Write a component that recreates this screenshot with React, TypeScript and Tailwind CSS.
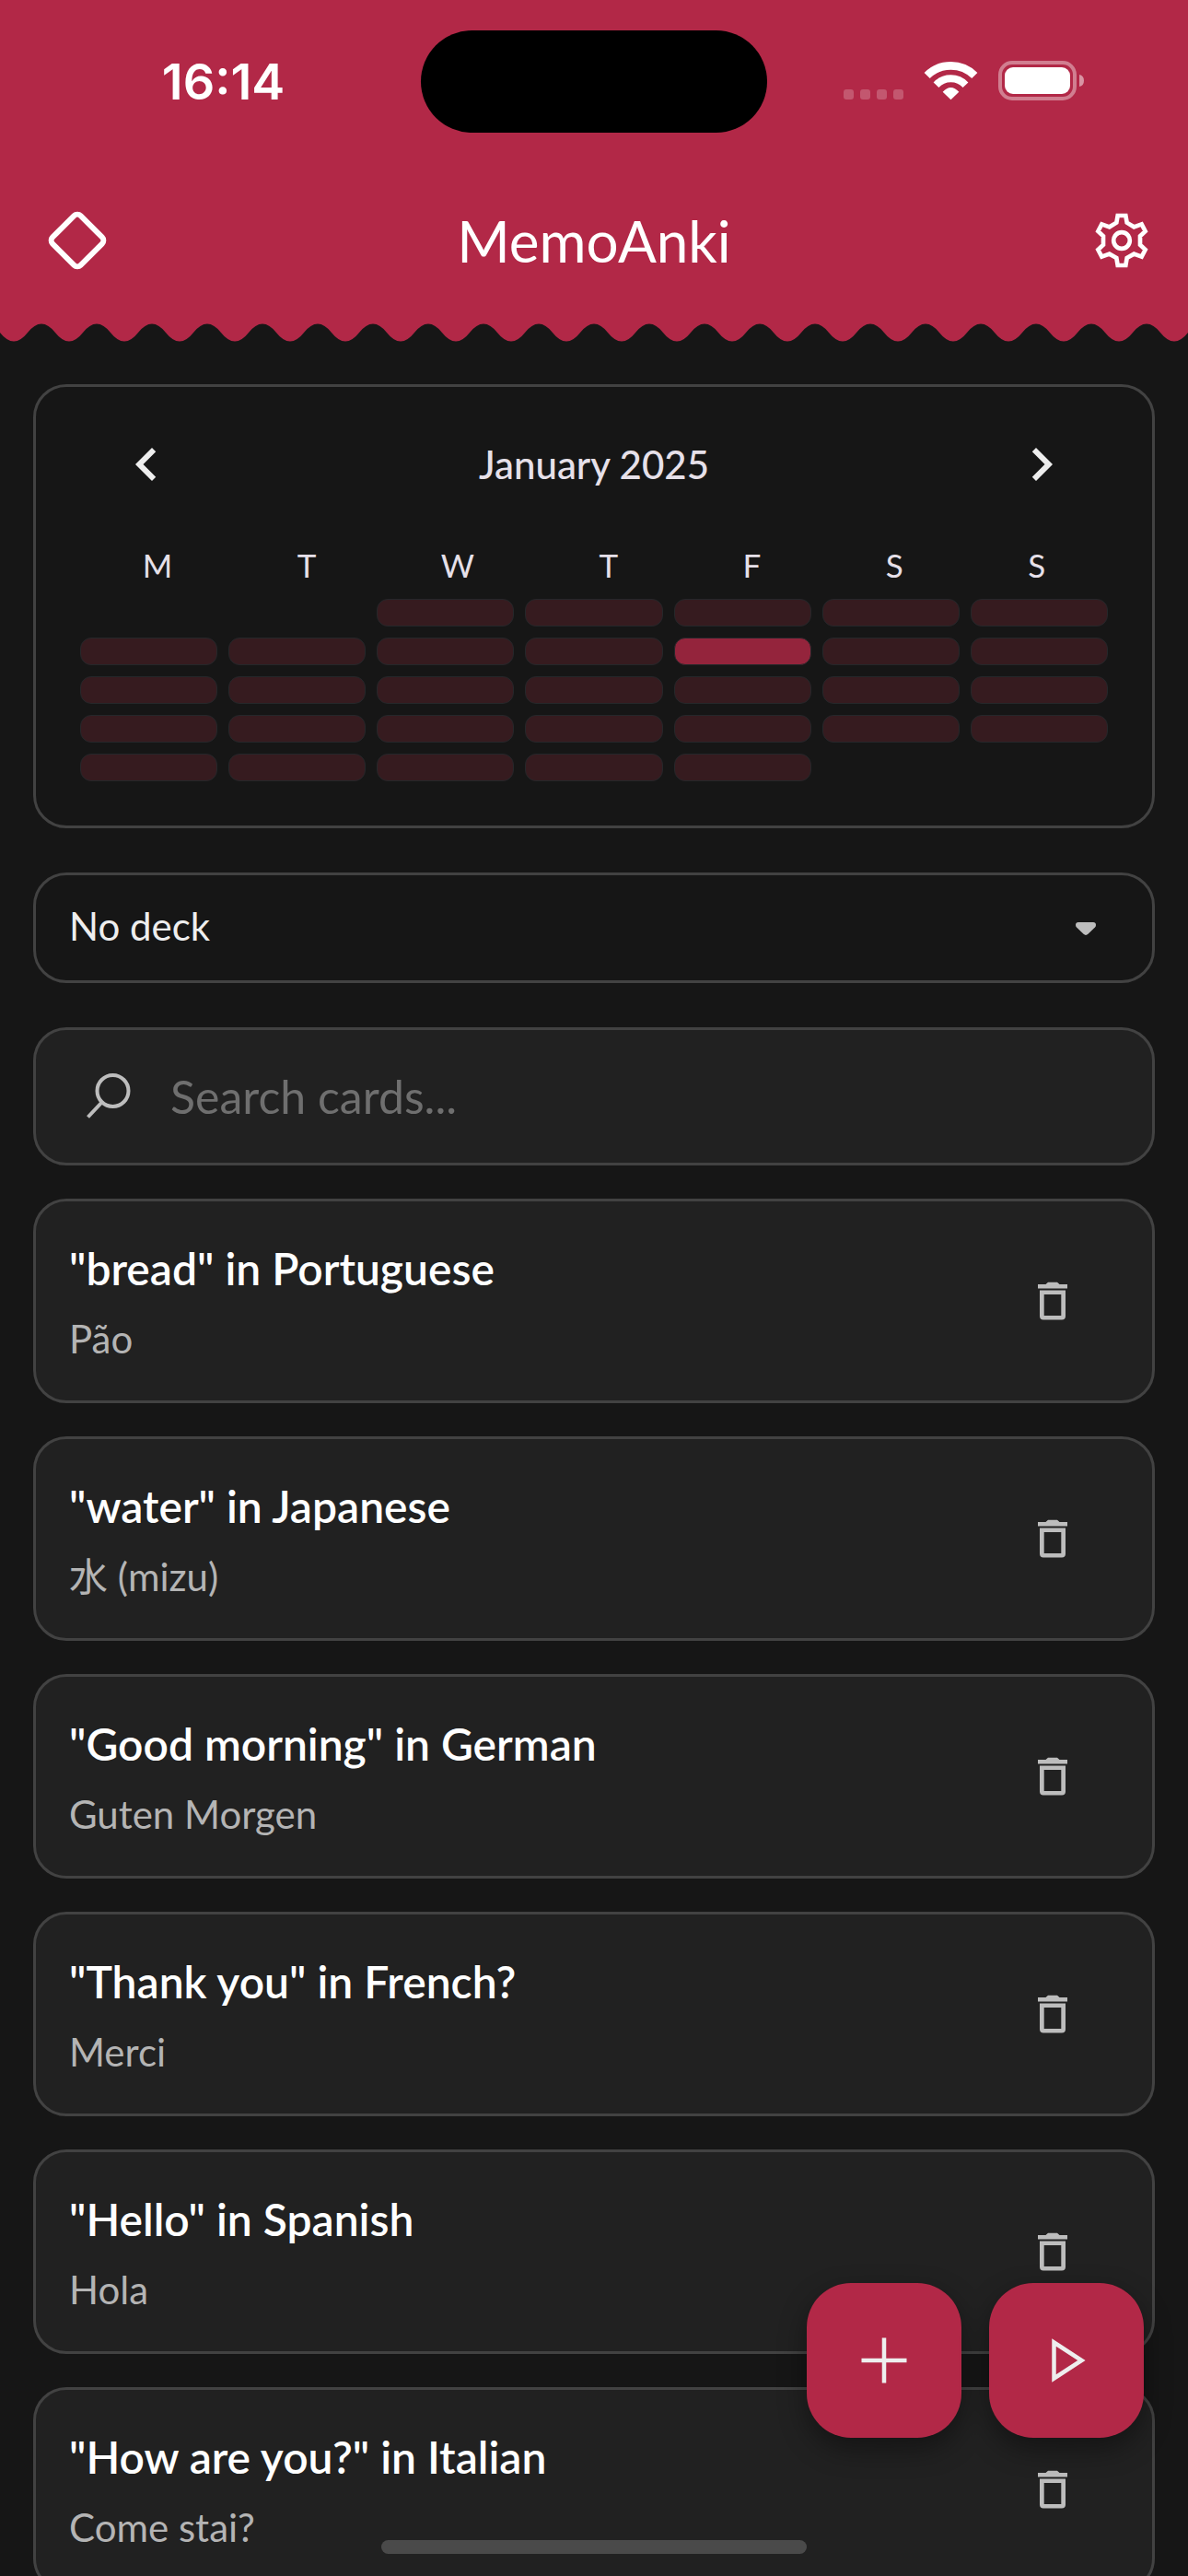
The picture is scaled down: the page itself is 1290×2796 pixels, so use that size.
const weekdays = ['M', 'T', 'W', 'T', 'F', 'S', 'S'];

// January 2025 starts on a Wednesday
const leadingBlanks = 2;
const daysInMonth = 31;
const activeDay = 10;

const cards = [
  { question: '"bread" in Portuguese', answer: 'Pão' },
  { question: '"water" in Japanese', answer: '水 (mizu)' },
  { question: '"Good morning" in German', answer: 'Guten Morgen' },
  { question: '"Thank you" in French?', answer: 'Merci' },
  { question: '"Hello" in Spanish', answer: 'Hola' },
  { question: '"How are you?" in Italian', answer: 'Come stai?' },
];

const StatusBar = () => {
  return (
    <div className="grid h-[177px] grid-cols-[1fr_376px_1fr] items-center">
      <div className="pl-7 text-center font-['Inter',sans-serif] text-[54px] font-semibold text-white">16:14</div>
      <div className="h-[111px] rounded-full bg-black"></div>
      <div className="flex items-center justify-center pr-[34px]">
        <svg viewBox="0 0 290 70" className="h-[70px] w-[290px]" fill="none" aria-hidden="true">
          <g fill="#fff" fillOpacity="0.22">
            <rect x="16" y="43" width="11" height="11" rx="3" />
            <rect x="34" y="43" width="11" height="11" rx="3" />
            <rect x="52" y="43" width="11" height="11" rx="3" />
            <rect x="70" y="43" width="11" height="11" rx="3" />
          </g>
          <g transform="translate(0 -3) scale(0.3333)">
            <path d="M320 93A110 110 0 0 1 475 93" stroke="#fff" strokeWidth="26" />
            <path d="M349.5 123.5A66 66 0 0 1 445.500 123.500" stroke="#fff" strokeWidth="24" />
            <path d="M397.500 172L371 146Q397.500 118 424 146Z" fill="#fff" />
          </g>
          <rect x="186" y="14" width="81" height="39" rx="13" stroke="#fff" strokeOpacity="0.4" strokeWidth="4" />
          <rect x="191" y="19" width="71" height="29" rx="9" fill="#fff" />
          <path d="M272 27Q277 28 277 33.500Q277 39 272 40Z" fill="#fff" fillOpacity="0.5" />
        </svg>
      </div>
    </div>
  );
};

const Header = () => {
  return (
    <header>
      <div className="bg-[#b22847]">
        <StatusBar />
        <div className="flex h-[168px] items-center justify-between px-9">
          <button type="button" aria-label="Decks" className="flex w-24">
            <svg viewBox="18 9 288 288" className="size-24" fill="none" stroke="#fff" strokeWidth="18">
              <rect x="97.500" y="88.500" width="129" height="129" rx="15" transform="rotate(45 162 153)" />
            </svg>
          </button>
          <h1 className="text-[62px] leading-none text-white">MemoAnki</h1>
          <button type="button" aria-label="Settings" className="flex w-24 justify-end">
            <svg viewBox="36 42 216 216" className="size-[72px]" fill="none" stroke="#fff" strokeWidth="14">
              <path d="M131 69H157L161 92L184 106L209 97L221 120L204 136V164L221 180L209 203L184 194L161 207L157 231H131L127 207L104 194L79 203L67 180L84 164V136L67 120L79 97L104 106L127 92Z" />
              <circle cx="144" cy="150" r="26.500" />
            </svg>
          </button>
        </div>
      </div>
      {/* Wavy edge */}
      <svg className="block h-[27px] w-full" aria-hidden="true">
        <defs>
          <pattern id="wave" width="60" height="27" patternUnits="userSpaceOnUse">
            <path d="M0 0V16Q15 35 30 16T60 16V0Z" fill="#b22847" />
          </pattern>
        </defs>
        <rect width="100%" height="27" fill="url(#wave)" />
      </svg>
    </header>
  );
};

const Calendar = () => {
  const days = Array.from({ length: daysInMonth }, (_, i) => i + 1);

  return (
    <section className="rounded-[36px] border-3 border-[#424242] p-12">
      <div className="flex h-[72px] items-center justify-between px-9">
        <button type="button" aria-label="Previous month">
          <svg viewBox="0 0 24 24" className="size-[72px]" fill="#eee">
            <path d="M15.410 7.410L14 6l-6 6 6 6 1.410-1.410L10.830 12z" />
          </svg>
        </button>
        <h2 className="text-[42px] font-medium text-[#e6e0e9]">January 2025</h2>
        <button type="button" aria-label="Next month">
          <svg viewBox="0 0 24 24" className="size-[72px]" fill="#eee">
            <path d="M8.590 7.410L10 6l6 6-6 6-1.410-1.410L13.170 12z" />
          </svg>
        </button>
      </div>
      <div className="mt-[46px] flex justify-around text-[35px] leading-[54px] text-[#e6e0e9]">
        {weekdays.map((day, i) => (
          <span key={i}>{day}</span>
        ))}
      </div>
      <div className="mt-2.5 grid grid-cols-7 gap-3">
        {Array.from({ length: leadingBlanks }, (_, i) => (
          <div key={`blank-${i}`}></div>
        ))}
        {days.map((day) => (
          <div
            key={day}
            className={`h-[30px] rounded-xl border border-[#25272a] ${day === activeDay ? 'bg-[#94243c]' : 'bg-[#361b1f]'}`}
          ></div>
        ))}
      </div>
    </section>
  );
};

const DeckSelect = () => {
  return (
    <div className="relative mt-12">
      <select
        aria-label="Deck"
        className="block h-[120px] w-full appearance-none rounded-[36px] border-3 border-[#424242] bg-[#161616] px-9 pb-1 text-[42px] text-[#eee]"
      >
        <option>No deck</option>
      </select>
      <svg viewBox="0 0 24 16" className="pointer-events-none absolute top-[53px] right-[63px] h-4 w-6" fill="#bdbdbd">
        <path d="M4 1H20Q23 1 23 4Q23 5.500 22 6.500L14.500 13.800Q12 16 9.500 13.800L2 6.500Q1 5.500 1 4Q1 1 4 1Z" />
      </svg>
    </div>
  );
};

const SearchBox = () => {
  return (
    <label className="mt-12 flex h-[150px] items-center rounded-[36px] border-3 border-[#424242] bg-[#212121] pr-9 pl-[42px]">
      <svg viewBox="0 0 72 72" className="size-[72px] shrink-0" fill="none" stroke="#bdbdbd" strokeWidth="4">
        <circle cx="41.500" cy="30" r="17" />
        <path d="M29.500 42.500L14.500 58.500" />
      </svg>
      <input
        type="text"
        aria-label="Search cards"
        placeholder="Search cards..."
        className="ml-8 min-w-0 flex-1 bg-transparent text-[50px] text-white outline-none placeholder:text-[#6f6f6f]"
      />
    </label>
  );
};

const Card = ({ question, answer }: { question: string; answer: string }) => {
  return (
    <li className="flex h-[222px] shrink-0 items-center justify-between rounded-[36px] border-3 border-[#424242] bg-[#212121] pr-[72px] pl-9">
      <div>
        <h3 className="text-[48px] font-semibold leading-[72px] text-white">{question}</h3>
        <p className="mt-2.5 text-[42px] leading-[60px] text-[#b4b4b4]">{answer}</p>
      </div>
      <button type="button" aria-label={`Delete ${question}`}>
        <svg viewBox="0 0 72 72" className="size-[72px]" fill="#bdbdbd">
          <path d="M20 18H28.500L31 15.700H41L43.500 18H52V22.500H20Z" />
          <path fillRule="evenodd" d="M22 24.500H50V52.500Q50 56.500 46 56.500H26Q22 56.500 22 52.500ZM26.700 29V52H45.300V29Z" />
        </svg>
      </button>
    </li>
  );
};

const FloatingActions = () => {
  return (
    <div className="fixed right-12 bottom-[150px] flex gap-[30px]">
      <button
        type="button"
        aria-label="Add card"
        className="flex size-[168px] items-center justify-center rounded-[48px] bg-[#b22847] shadow-[0_12px_30px_rgba(0,0,0,0.4)]"
      >
        <svg viewBox="0 0 72 72" className="size-[72px]" stroke="#eee" strokeWidth="4.500">
          <path d="M36 11.500V60.500M11.500 36H60.500" />
        </svg>
      </button>
      <button
        type="button"
        aria-label="Start review"
        className="flex size-[168px] items-center justify-center rounded-[48px] bg-[#b22847] shadow-[0_12px_30px_rgba(0,0,0,0.4)]"
      >
        <svg viewBox="0 0 72 72" className="size-[72px]" fill="none" stroke="#eee" strokeWidth="4.500">
          <path d="M22.500 16.500V55.500L52.500 36Z" />
        </svg>
      </button>
    </div>
  );
};

const App = () => {
  return (
    <div className="flex h-screen flex-col overflow-hidden bg-[#161616] font-['Lato','Noto_Sans_CJK_JP',sans-serif]">
      <Header />
      <main className="min-h-0 flex-1 overflow-hidden px-9 pt-[45px]">
        <Calendar />
        <DeckSelect />
        <SearchBox />
        <ul className="mt-9 flex flex-col gap-9">
          {cards.map((card) => (
            <Card key={card.question} question={card.question} answer={card.answer} />
          ))}
        </ul>
      </main>
      <FloatingActions />
      {/* Home indicator */}
      <div className="fixed inset-x-0 bottom-6 mx-auto h-[15px] w-[462px] rounded-full bg-[#4a4a4a]"></div>
    </div>
  );
};

export default App;
